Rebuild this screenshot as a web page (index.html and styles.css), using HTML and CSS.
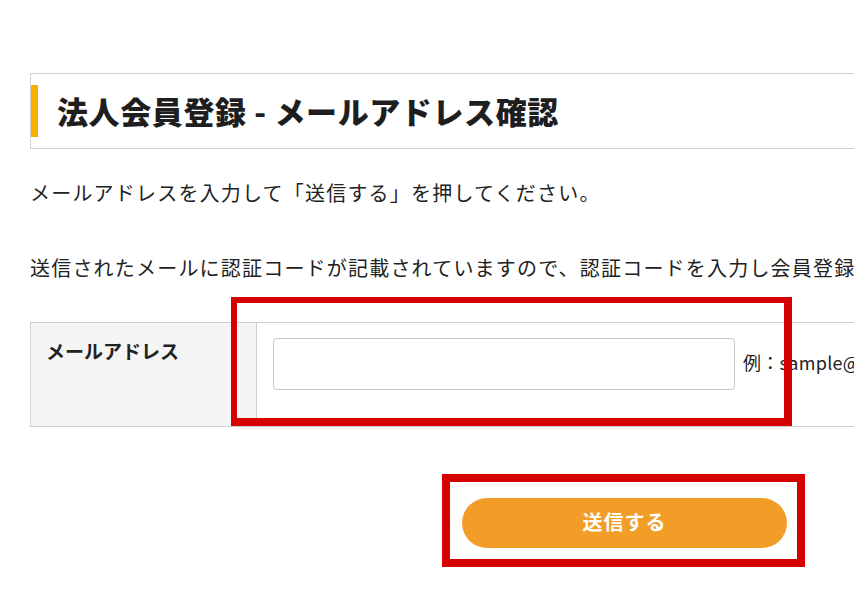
FILE: index.html
```html
<!DOCTYPE html>
<html lang="ja">
<head>
<meta charset="utf-8">
<title>法人会員登録 - メールアドレス確認</title>
<link rel="stylesheet" href="styles.css">
</head>
<body>
<div class="page">
  <div class="heading">
    <h1 class="heading-title">法人会員登録 - メールアドレス確認</h1>
  </div>
  <p class="lead lead-first">メールアドレスを入力して「送信する」を押してください。</p>
  <p class="lead lead-second">送信されたメールに認証コードが記載されていますので、認証コードを入力し会員登録</p>
  <div class="form-table">
    <div class="form-label">メールアドレス</div>
    <div class="form-field">
      <input class="email-input" type="text">
      <span class="example">例：sample@</span>
    </div>
  </div>
  <div class="actions">
    <button class="submit" type="button">送信する</button>
  </div>
</div>
<div class="mark mark-field"></div>
<div class="mark mark-button"></div>
</body>
</html>
```
FILE: styles.css
```css
html, body {
  margin: 0;
  padding: 0;
  background: #fff;
  overflow: hidden;
  width: 854px;
  height: 614px;
}
body {
  font-family: "Noto Sans CJK JP", "Noto Sans", sans-serif;
  color: #222;
  position: relative;
}
.page {
  padding: 73px 0 0 30px;
  width: 1200px;
}
.heading {
  border: 1px solid #cfcfcf;
  padding: 11px 0;
}
.heading-title {
  margin: 0;
  border-left: 7px solid #f9ae00;
  padding-left: 19px;
  height: 52px;
  line-height: 52px;
  font-size: 31px;
  font-weight: 900;
  letter-spacing: 0.6px;
  color: #1e1e1e;
  white-space: nowrap;
}
.lead {
  margin: 0;
  font-size: 20px;
  line-height: 30px;
  letter-spacing: 1.2px;
  white-space: nowrap;
}
.lead-first {
  margin-top: 29px;
}
.lead-second {
  margin-top: 45px;
}
.form-table {
  margin-top: 39px;
  display: flex;
  border: 1px solid #cfcfcf;
  height: 103px;
}
.form-label {
  width: 210px;
  background: #f5f5f5;
  border-right: 1px solid #cfcfcf;
  padding: 17px 0 0 15px;
  font-size: 19px;
  font-weight: 700;
  line-height: 22px;
  color: #222;
}
.form-field {
  display: flex;
  align-items: flex-start;
  padding: 15px 0 0 16px;
  gap: 8px;
}
.email-input {
  width: 462px;
  height: 52px;
  box-sizing: border-box;
  border: 1px solid #c8c8c8;
  border-radius: 4px;
  margin: 0;
  padding: 0 10px;
  background: #fff;
}
.example {
  font-size: 18px;
  line-height: 48px;
  white-space: nowrap;
  color: #222;
  letter-spacing: 0.3px;
}
.actions {
  margin-top: 71px;
  padding-left: 432px;
}
.submit {
  width: 325px;
  height: 50px;
  border: none;
  border-radius: 25px;
  background: #f19d27;
  color: #fff;
  font-family: "Noto Sans CJK JP", sans-serif;
  font-size: 20px;
  font-weight: 700;
  letter-spacing: 1px;
  padding: 0 0 3px;
}
.mark {
  position: absolute;
  box-sizing: border-box;
  border-style: solid;
  border-color: #d50000;
}
.mark-field {
  left: 231px;
  top: 297px;
  width: 561px;
  height: 129px;
  border-width: 6px 8px 8px 6px;
}
.mark-button {
  left: 442px;
  top: 474px;
  width: 363px;
  height: 93px;
  border-width: 8px;
}
```
